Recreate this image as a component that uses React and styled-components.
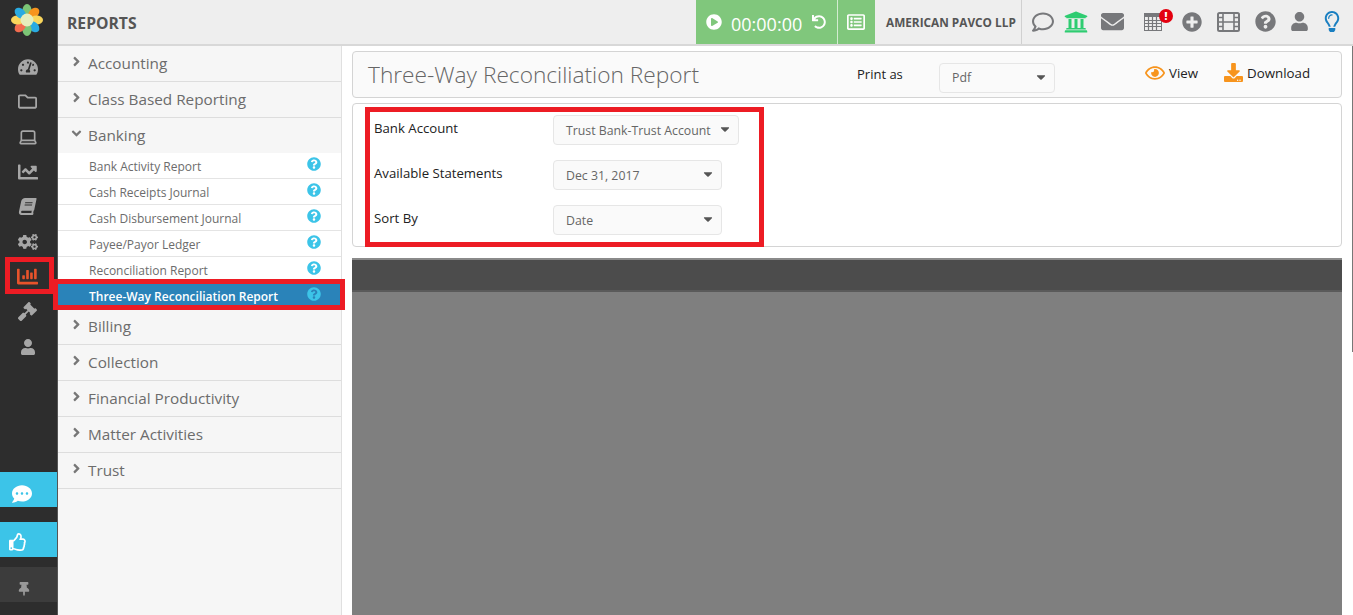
import React from 'react'
import styled, { createGlobalStyle } from 'styled-components'
import {
  FaTachometerAlt,
  FaRegFolder,
  FaChartLine,
  FaBook,
  FaCogs,
  FaChartBar,
  FaGavel,
  FaUser,
  FaCommentDots,
  FaRegThumbsUp,
  FaThumbtack,
  FaRegComment,
  FaUniversity,
  FaEnvelope,
  FaPlusCircle,
  FaQuestionCircle,
  FaRegLightbulb,
  FaPlayCircle,
  FaUndo,
  FaRegListAlt,
  FaRegEye,
  FaDownload,
  FaAngleRight,
  FaAngleDown,
  FaCaretDown,
} from 'react-icons/fa'
import { LuLaptop } from 'react-icons/lu'

const GlobalStyle = createGlobalStyle`
  html, body {
    margin: 0;
    height: 100%;
    overflow: hidden;
    background: #fff;
    font-family: "Open Sans", "Liberation Sans", sans-serif;
  }
  *, *::before, *::after { box-sizing: border-box; }
`

const Logo = () => (
  <svg width="32" height="32" viewBox="-16 -16 32 32">
    {[
      ['#7cc576', 0],
      ['#f7941d', 45],
      ['#f9d65c', 90],
      ['#29abe2', 135],
      ['#7cc576', 180],
      ['#f26c4f', 225],
      ['#f9d65c', 270],
      ['#29abe2', 315],
    ].map(([c, a]) => (
      <ellipse key={a} cx="0" cy="-9.5" rx="4.6" ry="6.5" fill={c} transform={`rotate(${a})`} />
    ))}
    <circle r="6.5" fill="#e6eebc" />
  </svg>
)

// calendar grid with a thick top, the one under the red badge
const CalendarIcon = () => (
  <svg width="18" height="18" viewBox="0 0 18 18" fill="none" stroke="currentColor">
    <rect x="0.5" y="0.5" width="17" height="17" strokeWidth="1" />
    <rect x="0" y="0" width="18" height="4" fill="currentColor" stroke="none" />
    <path d="M0 7.5h18M0 10.5h18M0 13.5h18M4.5 4v14M8.5 4v14M12.5 4v14" strokeWidth="1.2" />
  </svg>
)

const FilmIcon = () => (
  <svg width="23" height="20" viewBox="0 0 23 20" fill="none" stroke="currentColor">
    <rect x="1" y="1" width="21" height="18" rx="1.5" strokeWidth="2" />
    <path d="M6 1v18M17 1v18M6 10h11" strokeWidth="1.6" />
    <path d="M1 5.5h5M1 10h5M1 14.5h5M17 5.5h5M17 10h5M17 14.5h5" strokeWidth="1.4" />
  </svg>
)

const railTop = [
  [FaTachometerAlt, 20],
  [FaRegFolder, 19],
  [LuLaptop, 20],
  [FaChartLine, 20],
  [FaBook, 17, true],
  [FaCogs, 20],
  [FaChartBar, 21],
  [FaGavel, 19],
  [FaUser, 16],
]

const before = ['Accounting', 'Class Based Reporting']
const after = ['Billing', 'Collection', 'Financial Productivity', 'Matter Activities', 'Trust']
const banking = ['Bank Activity Report', 'Cash Receipts Journal', 'Cash Disbursement Journal', 'Payee/Payor Ledger', 'Reconciliation Report']

const filters = [
  ['Bank Account', 'Trust Bank-Trust Account', 186],
  ['Available Statements', 'Dec 31, 2017', 169],
  ['Sort By', 'Date', 169],
]

const App = () => (
  <>
    <GlobalStyle />
    <Page>
      <Rail>
        <LogoSlot>
          <Logo />
        </LogoSlot>
        <RailIcons>
          {railTop.map(([Icon, size, slant], i) => (
            <RailIcon key={i} $active={i === 6} $slant={slant}>
              <Icon size={size} />
            </RailIcon>
          ))}
        </RailIcons>
        <RailBottom>
          <RailButton $bg="#3cc4e8" $right={13} $top={9}>
            <FaCommentDots size={20} />
          </RailButton>
          <RailButton $bg="#3cc4e8" $right={21} $top={4}>
            <FaRegThumbsUp size={18} />
          </RailButton>
          <RailButton $bg="#3c3c3c" $color="#999" $right={9} $top={8}>
            <FaThumbtack size={14} />
          </RailButton>
        </RailBottom>
      </Rail>

      <Column>
        <Header>
          <HeaderTitle>REPORTS</HeaderTitle>
          <Timer>
            <TimerMain>
              <FaPlayCircle size={16} />
              <TimerText>00:00:00</TimerText>
              <FaUndo size={14} />
            </TimerMain>
            <TimerSide>
              <FaRegListAlt size={18} />
            </TimerSide>
          </Timer>
          <Firm>AMERICAN PAVCO LLP</Firm>
          <HeaderIcons>
            <HeaderIcon $w={22} $gap={10}><FaRegComment size={22} /></HeaderIcon>
            <HeaderIcon $w={24} $gap={13} $color="#2ecc71"><FaUniversity size={24} /></HeaderIcon>
            <HeaderIcon $w={23} $gap={20}><FaEnvelope size={23} /></HeaderIcon>
            <HeaderIcon $w={18} $gap={20}>
              <CalendarIcon />
              <Badge>!</Badge>
            </HeaderIcon>
            <HeaderIcon $w={20} $gap={15}><FaPlusCircle size={20} /></HeaderIcon>
            <HeaderIcon $w={23} $gap={15}><FilmIcon /></HeaderIcon>
            <HeaderIcon $w={21} $gap={14}><FaQuestionCircle size={21} /></HeaderIcon>
            <HeaderIcon $w={19} $gap={15}><FaUser size={19} /></HeaderIcon>
            <HeaderIcon $w={16} $gap={0} $color="#1a7fc1"><FaRegLightbulb size={21} /></HeaderIcon>
          </HeaderIcons>
        </Header>

        <Body>
          <SideNav>
            {before.map(t => (
              <GroupRow key={t}>
                <FaAngleRight size={15} />
                <span>{t}</span>
              </GroupRow>
            ))}
            <GroupRow $open>
              <FaAngleDown size={15} />
              <span>Banking</span>
            </GroupRow>
            {banking.map(t => (
              <SubRow key={t}>
                <span>{t}</span>
                <FaQuestionCircle size={14} />
              </SubRow>
            ))}
            <SubRow $active>
              <span>Three-Way Reconciliation Report</span>
              <FaQuestionCircle size={14} />
              <NavHighlight />
            </SubRow>
            {after.map(t => (
              <GroupRow key={t}>
                <FaAngleRight size={15} />
                <span>{t}</span>
              </GroupRow>
            ))}
          </SideNav>

          <Main>
            <TitlePanel>
              <Title>Three-Way Reconciliation Report</Title>
              <PrintLabel>Print as</PrintLabel>
              <PrintSelect $w={116}>
                <span>Pdf</span>
                <FaCaretDown size={14} />
              </PrintSelect>
              <Action $left={90}>
                <FaRegEye size={20} color="#f7941d" />
                <span>View</span>
              </Action>
              <Action $left={26}>
                <FaDownload size={19} color="#f7941d" />
                <span>Download</span>
              </Action>
            </TitlePanel>

            <FilterPanel>
              <FilterHighlight />
              {filters.map(([label, value, w]) => (
                <FilterRow key={label}>
                  <FilterLabel>{label}</FilterLabel>
                  <Select $w={w}>
                    <span>{value}</span>
                    <FaCaretDown size={14} />
                  </Select>
                </FilterRow>
              ))}
            </FilterPanel>

            <Viewer>
              <ViewerBar />
            </Viewer>
          </Main>
        </Body>
      </Column>
      <ScrollEdge />
    </Page>
  </>
)

const Page = styled.div`
  display: flex;
  height: 615px;
  width: 1353px;
  position: relative;
  overflow: hidden;
`

const ScrollEdge = styled.div`
  position: absolute;
  right: 0;
  top: 46px;
  width: 1px;
  height: 306px;
  background: #777;
`

const Rail = styled.aside`
  width: 58px;
  flex: none;
  background: #2d2d2d;
  border-right: 1px solid #555;
  display: flex;
  flex-direction: column;
`

const LogoSlot = styled.div`
  height: 40px;
  display: flex;
  align-items: center;
  justify-content: center;
  padding-right: 3px;
  margin-bottom: 9px;
`

const RailIcons = styled.div`
  display: flex;
  flex-direction: column;
`

const RailIcon = styled.div`
  height: 35px;
  display: flex;
  align-items: center;
  justify-content: center;
  padding-right: 2px;
  color: ${p => (p.$active ? '#e8532b' : '#a6a6a6')};
  position: relative;
  svg {
    transform: ${p => (p.$slant ? 'skewX(-12deg)' : 'none')};
  }
  &::after {
    content: ${p => (p.$active ? '""' : 'none')};
    position: absolute;
    left: 5px;
    top: -2px;
    width: 49px;
    height: 37px;
    border: 5px solid #ed1c24;
  }
`

const RailBottom = styled.div`
  margin-top: auto;
  margin-bottom: 13px;
  display: flex;
  flex-direction: column;
  gap: 15px;
  & > :last-child {
    margin-top: -5px;
  }
`

const RailButton = styled.div`
  height: 35px;
  width: 57px;
  background: ${p => p.$bg};
  color: ${p => p.$color || '#fff'};
  display: flex;
  align-items: center;
  justify-content: center;
  padding-right: ${p => p.$right}px;
  padding-top: ${p => p.$top}px;
`

const Column = styled.div`
  flex: 1;
  min-width: 0;
  display: flex;
  flex-direction: column;
`

const Header = styled.header`
  height: 46px;
  flex: none;
  background: #eee;
  border-bottom: 2px solid #d8d8d8;
  display: flex;
  align-items: stretch;
`

const HeaderTitle = styled.div`
  width: 638px;
  flex: none;
  padding-left: 9px;
  font-size: 15.7px;
  font-weight: 700;
  color: #555;
  line-height: 46px;
`

const Timer = styled.div`
  display: flex;
  background: #80c77c;
  color: #fff;
  flex: none;
`

const TimerMain = styled.div`
  width: 142px;
  display: flex;
  align-items: center;
  gap: 9px;
  padding-left: 10px;
  border-right: 1px solid #d3ecd1;
`

const TimerText = styled.span`
  font-size: 18px;
  font-weight: 400;
  width: 71px;
  margin-top: 3px;
  margin-right: 1px;
`

const TimerSide = styled.div`
  width: 37px;
  display: flex;
  align-items: center;
  justify-content: center;
  padding-right: 2px;
`

const Firm = styled.div`
  width: 147px;
  flex: none;
  border-right: 1px solid #d0d0d0;
  padding-left: 11px;
  line-height: 45px;
  font-size: 11.8px;
  font-weight: 700;
  color: #555;
  white-space: nowrap;
`

const HeaderIcons = styled.div`
  flex: 1;
  display: flex;
  align-items: center;
  padding-left: 10px;
  padding-bottom: 1px;
`

const HeaderIcon = styled.span`
  width: ${p => p.$w}px;
  margin-right: ${p => p.$gap}px;
  display: flex;
  justify-content: center;
  color: ${p => p.$color || '#77787b'};
  position: relative;
`

const Badge = styled.span`
  position: absolute;
  top: -4px;
  right: -11px;
  width: 14px;
  height: 14px;
  border-radius: 50%;
  background: #e3000f;
  color: #fff;
  font-size: 10px;
  font-weight: 800;
  line-height: 14px;
  text-align: center;
`

const Body = styled.div`
  flex: 1;
  min-height: 0;
  display: flex;
`

const SideNav = styled.nav`
  width: 284px;
  flex: none;
  background: #f6f6f6;
  border-right: 1px solid #e0e0e0;
`

const GroupRow = styled.div`
  height: ${p => (p.$open ? 35 : 36)}px;
  padding: 0 0 1px 11px;
  border-bottom: ${p => (p.$open ? 'none' : '1px solid #ddd')};
  display: flex;
  align-items: center;
  gap: 4px;
  color: #6c6c6c;
  font-size: 15.3px;
  svg {
    margin-top: -4px;
    color: #777;
  }
`

const SubRow = styled.div`
  height: 26px;
  position: relative;
  background: ${p => (p.$active ? '#2a83b9' : '#fff')};
  border-bottom: ${p => (p.$active ? 'none' : '1px solid #e4e4e4')};
  padding: 0 20px 0 31px;
  display: flex;
  align-items: center;
  justify-content: space-between;
  font-size: 12px;
  font-weight: ${p => (p.$active ? 600 : 400)};
  color: ${p => (p.$active ? '#fff' : '#6c6c6c')};
  span {
    margin-top: ${p => (p.$active ? 0 : 2)}px;
  }
  svg {
    color: #3cc4e8;
    margin-top: -4px;
  }
`

const NavHighlight = styled.span`
  position: absolute;
  left: -5px;
  right: -4px;
  top: -4px;
  bottom: -1px;
  border: 5px solid #ed1c24;
  pointer-events: none;
`

const Main = styled.main`
  flex: 1;
  min-width: 0;
  padding: 5px 11px 0 10px;
  display: flex;
  flex-direction: column;
`

const TitlePanel = styled.section`
  height: 47px;
  flex: none;
  background: #fafafa;
  border: 1px solid #d4d4d4;
  border-radius: 4px;
  display: flex;
  align-items: center;
  padding: 0 30px 0 15px;
`

const Title = styled.h1`
  margin: 0;
  width: 489px;
  font-size: 22.7px;
  font-weight: 300;
  color: #666;
  white-space: nowrap;
`

const PrintLabel = styled.span`
  width: 82px;
  font-size: 13px;
  color: #222;
  margin-top: -1px;
`

const Select = styled.div`
  width: ${p => p.$w}px;
  height: 30px;
  flex: none;
  border: 1px solid #e6e6e6;
  border-radius: 4px;
  background: #fafafa;
  padding: 0 6px 0 12px;
  display: flex;
  align-items: center;
  justify-content: space-between;
  font-size: 12.3px;
  color: #666;
  svg {
    color: #555;
    margin-top: -2px;
  }
`

const PrintSelect = styled(Select)`
  margin-top: 6px;
`

const Action = styled.span`
  margin-left: ${p => p.$left}px;
  display: inline-flex;
  align-items: center;
  gap: 4px;
  font-size: 13.3px;
  color: #222;
  margin-top: -4px;
`

const FilterPanel = styled.section`
  height: 144px;
  margin-top: 5px;
  flex: none;
  position: relative;
  border: 1px solid #d4d4d4;
  border-radius: 4px;
  padding: 11px 0 0 21px;
  display: flex;
  flex-direction: column;
  gap: 15px;
`

const FilterHighlight = styled.div`
  position: absolute;
  left: 12px;
  top: 3px;
  width: 399px;
  height: 140px;
  border: 5px solid #ed1c24;
  pointer-events: none;
`

const FilterRow = styled.div`
  display: flex;
  align-items: flex-start;
`

const FilterLabel = styled.label`
  width: 179px;
  flex: none;
  font-size: 13.2px;
  color: #222;
  line-height: 24px;
  margin-top: 1px;
`

const Viewer = styled.section`
  margin-top: 11px;
  flex: 1;
  min-height: 0;
  background: #7f7f7f;
  border-top: 2px solid #8a8a8a;
`

const ViewerBar = styled.div`
  height: 32px;
  background: #4c4c4c;
  border-bottom: 2px solid #5a5a5a;
`

export default App
